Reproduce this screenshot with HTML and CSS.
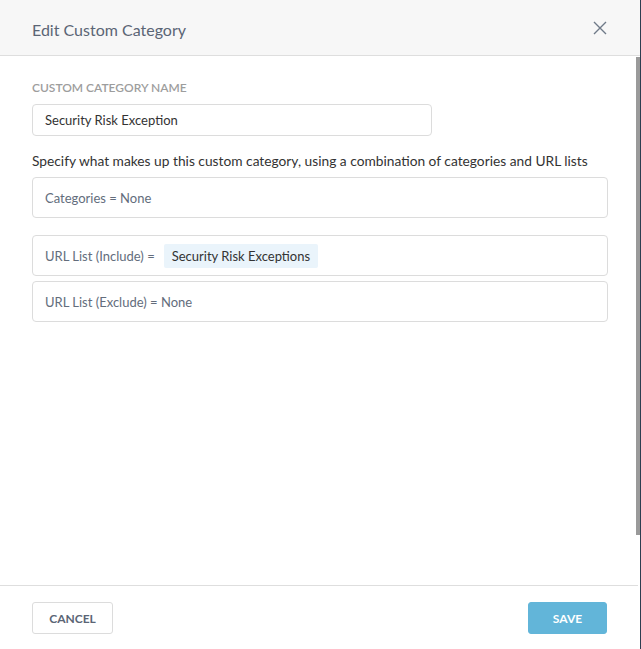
FILE: index.html
```html
<!DOCTYPE html>
<html>
<head>
<meta charset="utf-8">
<link rel="stylesheet" href="styles.css">
</head>
<body>
<div class="frame">
  <div class="modal">
    <div class="header">
      <h1 class="title">Edit Custom Category</h1>
      <svg class="close" width="14" height="14" viewBox="0 0 14 14"><path d="M1 1L13 13M13 1L1 13" stroke="#6f7a88" stroke-width="1.4" fill="none"/></svg>
    </div>
    <div class="body-wrap">
      <div class="content">
        <div class="label">CUSTOM CATEGORY NAME</div>
        <div class="input">Security Risk Exception</div>
        <p class="desc">Specify what makes up this custom category, using a combination of categories and URL lists</p>
        <div class="field">Categories = None</div>
        <div class="group">
          <div class="field">URL List (Include) = <span class="tag">Security Risk Exceptions</span></div>
          <div class="field">URL List (Exclude) = None</div>
        </div>
      </div>
      <div class="scrollbar"><div class="thumb"></div></div>
    </div>
    <div class="footer">
      <button class="btn cancel">CANCEL</button>
      <button class="btn save">SAVE</button>
    </div>
  </div>
  <div class="edge"></div>
</div>
</body>
</html>
```

FILE: styles.css
```css
* { box-sizing: border-box; }
html, body { margin: 0; padding: 0; background: #fff; }
body { font-family: Lato, "Open Sans", sans-serif; width: 641px; height: 649px; overflow: hidden; }
.frame { display: flex; height: 649px; }
.modal { flex: 1; display: flex; flex-direction: column; height: 649px; }
.edge { width: 1px; background: #2c3e50; }
.header {
  height: 56px; background: #f7f7f7; border-bottom: 1px solid #dedede;
  display: flex; align-items: center; justify-content: space-between;
  padding: 3px 33px 0 32px;
}
.title { margin: 0; font-size: 16px; font-weight: 400; color: #5b6575; letter-spacing: 0; }
.close { display: block; margin-top: -2px; }
.body-wrap { flex: 1; display: flex; }
.content { flex: 1; padding: 24px 28px 0 32px; }
.scrollbar { width: 4px; padding-top: 1px; }
.thumb { width: 4px; height: 478px; background: #9a9a9a; }
.label { font-size: 12px; font-weight: 600; color: #9d9d9d; letter-spacing: 0; line-height: 14px; margin-top: 1px; }
.input {
  margin-top: 9px; width: 400px; height: 32px; border: 1px solid #dcdcdc; border-radius: 4px;
  padding: 0 12px; font-size: 13px; color: #333; display: flex; align-items: center;
}
.desc { margin: 16px 0 7px; font-size: 13.75px; color: #333; line-height: 18px; }
.field {
  height: 41px; border: 1px solid #dcdcdc; border-radius: 4px; padding: 0 12px;
  display: flex; align-items: center; font-size: 13px; color: #636d7c;
}
.group { margin-top: 17px; display: flex; flex-direction: column; gap: 5px; }
.tag {
  margin-left: 9px; background: #eaf4fb; color: #333; padding: 0 8px; height: 24px;
  display: inline-flex; align-items: center; border-radius: 2px;
}
.footer {
  height: 64px; border-top: 1px solid #dedede; display: flex; justify-content: space-between;
  align-items: flex-start; padding: 16px 32px 0 32px; margin-right: 2px;
}
.btn {
  font-family: Lato, sans-serif; font-size: 12px; font-weight: 700; height: 32px; border-radius: 3px;
  padding: 0; cursor: pointer;
}
.cancel { width: 81px; background: #fff; border: 1px solid #dcdcdc; color: #5b6575; }
.save { width: 79px; background: #62b5d9; border: 1px solid #62b5d9; color: #fff; margin-right: -1px; }
```
